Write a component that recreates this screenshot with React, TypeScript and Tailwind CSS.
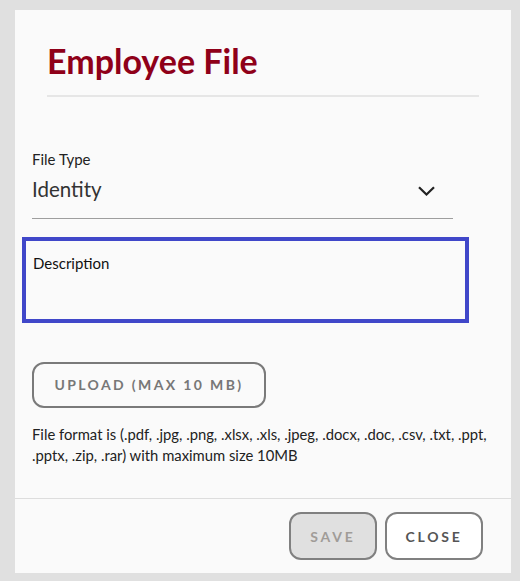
export default function App() {
  return (
    <div className="min-h-screen bg-[#e0e0e0] pt-[10px] pl-[15px] font-['Lato',sans-serif]">
      <div className="flex h-[563px] w-[496px] flex-col bg-[#fafafa]">
        <div className="px-8 pt-[31px]">
          <h1 className="border-b-2 border-[#e6e6e6] pb-[13px] text-[34px] font-bold leading-[1.2] text-[#8f0019]">
            Employee File
          </h1>
        </div>

        <div className="flex-1 px-[17px] pt-[52px]">
          <div className="w-[421px]">
            <label className="block text-[15px] leading-5 text-[#222]">File Type</label>
            <div className="mt-[8px] flex items-center justify-between border-b border-[#9e9e9e] pb-[17px]">
              <span className="text-[20.5px] leading-6 text-[#333]">Identity</span>
              <svg
                className="mr-[18px] mt-[4px]"
                width="17"
                height="10"
                viewBox="0 0 17 10"
                fill="none"
                stroke="#222"
                strokeWidth="2.2"
              >
                <path d="M1 1.2l7.5 7.3 7.5-7.3" />
              </svg>
            </div>
          </div>

          <div className="-ml-[10px] mt-[18px] h-[86px] w-[447px] border-4 border-[#4047c9] pl-[7px] pt-[10px]">
            <span className="text-[15px] leading-5 text-[#111]">Description</span>
          </div>

          <button className="mt-[39px] h-[46px] w-[234px] rounded-xl border-2 border-[#7a7a7a] text-[14px] font-bold tracking-[0.17em] text-[#777]">
            UPLOAD (MAX 10 MB)
          </button>

          <p className="mt-[16px] text-[14.8px] leading-[21px] text-[#222]">
            File format is (.pdf, .jpg, .png, .xlsx, .xls, .jpeg, .docx, .doc, .csv, .txt, .ppt,
            .pptx, .zip, .rar) with maximum size 10MB
          </p>
        </div>

        <div className="flex justify-end gap-2 border-t border-[#dddddd] pb-[13px] pl-4 pr-[28px] pt-[13px]">
          <button className="h-12 w-[88px] rounded-xl border-2 border-[#808080] bg-[#e0e0e0] text-[14px] font-bold tracking-[0.2em] text-[#a09c98]">
            SAVE
          </button>
          <button className="h-12 w-[98px] rounded-xl border-2 border-[#808080] bg-white text-[14px] font-bold tracking-[0.2em] text-[#555]">
            CLOSE
          </button>
        </div>
      </div>
    </div>
  );
}
